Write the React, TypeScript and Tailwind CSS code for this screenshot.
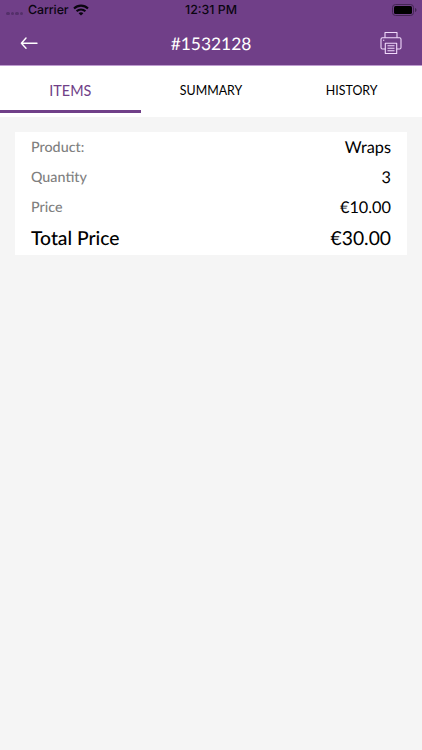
import { useState } from "react";
import { clsx } from "clsx";

const TABS = ["ITEMS", "SUMMARY", "HISTORY"] as const;

const ORDER_ROWS = [
  { label: "Product:", value: "Wraps" },
  { label: "Quantity", value: "3" },
  { label: "Price", value: "€10.00" },
];

function WifiIcon() {
  return (
    <svg width="16" height="12" viewBox="0 0 16 12" fill="none" stroke="#0a0510" strokeWidth="2.1">
      <path d="M1 4.6C5 .6 11 .6 15 4.6" />
      <path d="M3.6 7.3c2.5-2.4 6.3-2.4 8.8 0" />
      <path d="M8 11.6 5.6 9.2c1.3-1.2 3.5-1.2 4.8 0z" fill="#0a0510" stroke="none" />
    </svg>
  );
}

function BatteryIcon() {
  return (
    <svg width="25" height="12" viewBox="0 0 25 12" fill="none">
      <rect x="0.5" y="0.5" width="21" height="11" rx="3" stroke="#432653" />
      <rect x="2" y="2" width="18" height="8" rx="1.6" fill="#000" />
      <path d="M23 4v4c.9-.3 1.5-1.1 1.5-2S23.9 4.3 23 4z" fill="#432653" />
    </svg>
  );
}

function BackIcon() {
  return (
    <svg width="18" height="12" viewBox="0 0 18 12" fill="none" stroke="#fff" strokeWidth="1.4" strokeLinecap="round" strokeLinejoin="round">
      <path d="M17 6.2H1.4M6 1 1.4 6.2 6 11.2" />
    </svg>
  );
}

function PrinterIcon() {
  return (
    <svg width="22" height="24" viewBox="0 0 22 24" fill="none" stroke="#f0d9fb" strokeWidth="1.1" strokeLinejoin="round">
      <path d="M5 6.7V1.5h12v5.2" />
      <path d="M5.3 18H2.4A1.4 1.4 0 0 1 1 16.6V8.2a1.4 1.4 0 0 1 1.4-1.4h17.2A1.4 1.4 0 0 1 21 8.2v8.4a1.4 1.4 0 0 1-1.4 1.4h-2.9" />
      <path d="M5.3 12.2h11.4v10.3H5.3z" />
      <path d="M7.5 14.7h7M7.5 17.2h7M7.5 19.7h7M3 9.2h1.3" />
    </svg>
  );
}

function StatusBar() {
  return (
    <div className="grid h-5 grid-cols-3 items-center font-['Inter',sans-serif] text-[12.4px] font-medium text-[#0a0510]">
      <div className="flex items-center pt-px pl-1.5">
        <div className="flex gap-[1px] pt-1.5">
          {[0, 1, 2, 3].map(i => (
            <span key={i} className="size-[3.5px] rounded-full bg-[#54306a]" />
          ))}
        </div>
        <span className="pr-1 pl-[5px] tracking-[-0.1px]">Carrier</span>
        <WifiIcon />
      </div>
      <span className="pt-px text-center">12:31 PM</span>
      <div className="flex justify-end pr-[5px]">
        <BatteryIcon />
      </div>
    </div>
  );
}

export default function App() {
  const [activeTab, setActiveTab] = useState<(typeof TABS)[number]>("ITEMS");

  return (
    <div className="flex h-[750px] w-[422px] flex-col bg-[#f5f5f5] font-['Lato',sans-serif] text-black [text-rendering:geometricPrecision]">
      {/* Header */}
      <header className="h-[66px] border-b border-[#bf9dd0] bg-[#703f88]">
        <StatusBar />
        <div className="flex h-[45px] items-center justify-between px-5">
          <button type="button" aria-label="Back" className="w-[22px]">
            <BackIcon />
          </button>
          <h1 className="pt-0.5 text-[17.4px] leading-[22px] text-white">#1532128</h1>
          <button type="button" aria-label="Print">
            <PrinterIcon />
          </button>
        </div>
      </header>

      {/* Tabs */}
      <nav className="grid h-[51px] grid-cols-3 bg-white">
        {TABS.map(tab => (
          <button
            key={tab}
            type="button"
            onClick={() => setActiveTab(tab)}
            className={clsx(
              "h-[47px] border-b-3",
              tab === activeTab
                ? "border-[#703f88] pt-[5px] text-[14.4px] text-[#703f88]"
                : "border-transparent pt-1.5 text-[12.4px]",
            )}
          >
            {tab}
          </button>
        ))}
      </nav>

      {/* Order details */}
      <main className="p-[15px]">
        <dl className="h-[123px] bg-white px-4">
          {ORDER_ROWS.map(row => (
            <div key={row.label} className="flex h-[30px] items-center justify-between pt-0.5">
              <dt className="text-[14.3px] font-medium text-[#808080]">{row.label}</dt>
              <dd className="text-[16.3px]">{row.value}</dd>
            </div>
          ))}
          <div className="flex h-8 items-center justify-between pt-0.5 text-[19.3px]">
            <dt className="font-medium">Total Price</dt>
            <dd>€30.00</dd>
          </div>
        </dl>
      </main>
    </div>
  );
}
